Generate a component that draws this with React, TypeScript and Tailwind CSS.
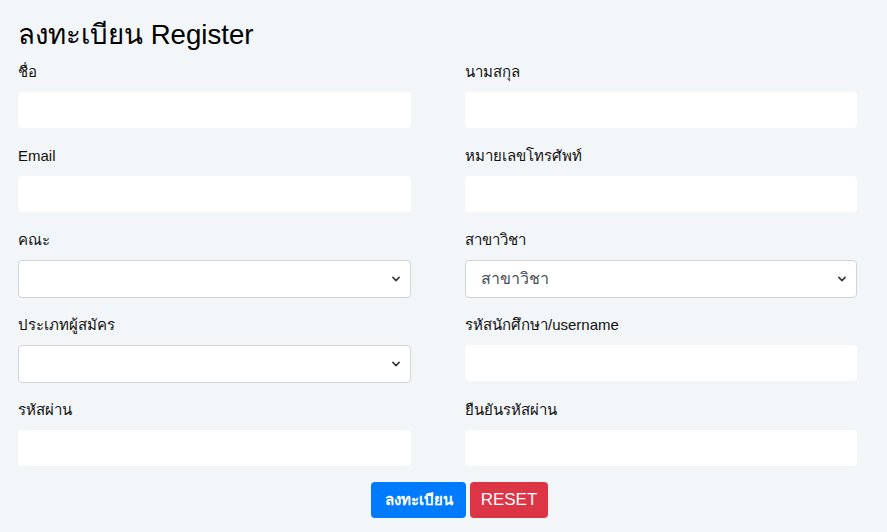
import React from "react";

const font = { fontFamily: '"Liberation Sans", Arial, "Noto Sans", sans-serif' };

function Chevron() {
  return (
    <svg width="10" height="10" viewBox="0 0 16 16" className="absolute right-[9px] top-1/2 -translate-y-1/2 pointer-events-none">
      <path d="M3 5.5l5 5 5-5" fill="none" stroke="#343a40" strokeWidth="2.6" strokeLinecap="round" strokeLinejoin="round" />
    </svg>
  );
}

function Field({ label, kind = "input", placeholder }: { label: string; kind?: "input" | "select"; placeholder?: string }) {
  return (
    <div className="flex flex-col">
      <div className="h-[20px] flex items-center text-[15px] leading-[20px] text-[#111] mb-[10px] whitespace-nowrap">{label}</div>
      {kind === "input" ? (
        <div className="h-[36px] w-full bg-white rounded-[4px]" />
      ) : (
        <div className="relative h-[38px] -mb-px w-full bg-white rounded-[4px] border border-[#cfd4d9] flex items-center px-[15px]">
          <span className="text-[16px] leading-[20px] text-[#495057]">{placeholder}</span>
          <Chevron />
        </div>
      )}
    </div>
  );
}

export default function App() {
  return (
    <div className="w-[887px] h-[532px] bg-[#f3f6f8] overflow-hidden" style={font}>
      <div className="pl-[18px] pr-[30px] pt-[18px]">
        <div className="h-[34px] flex items-center text-[27.6px] text-black mb-[10px] whitespace-nowrap">ลงทะเบียน Register</div>
        <div className="grid grid-cols-[393px_392px] gap-x-[54px] gap-y-[18px] items-start">
          <Field label="ชื่อ" />
          <Field label="นามสกุล" />
          <Field label="Email" />
          <Field label="หมายเลขโทรศัพท์" />
          <Field label="คณะ" kind="select" />
          <Field label="สาขาวิชา" kind="select" placeholder="สาขาวิชา" />
          <Field label="ประเภทผู้สมัคร" kind="select" />
          <Field label="รหัสนักศึกษา/username" />
          <Field label="รหัสผ่าน" />
          <Field label="ยืนยันรหัสผ่าน" />
        </div>
        <div className="flex justify-center gap-[4px] mt-[16px] pl-[44px]">
          <button className="h-[36px] w-[95px] rounded-[4px] bg-[#007bff] text-white font-bold text-[15px]">ลงทะเบียน</button>
          <button className="h-[36px] w-[78px] rounded-[4px] bg-[#dc3545] text-white text-[17px]">RESET</button>
        </div>
      </div>
    </div>
  );
}
